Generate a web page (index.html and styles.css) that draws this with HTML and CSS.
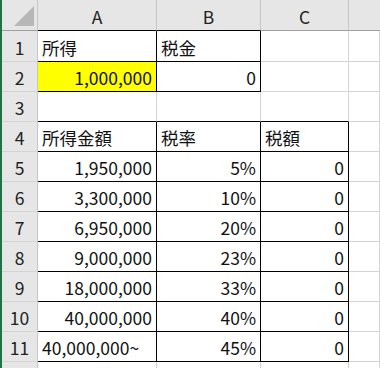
FILE: index.html
```html
<!DOCTYPE html>
<html lang="ja">
<head>
  <meta charset="UTF-8" />
  <meta name="viewport" content="width=device-width, initial-scale=1" />
  <title>所得税</title>
  <link rel="stylesheet" href="styles.css">
</head>
<body>
  <div class="sheet">
    <!-- column headers -->
    <div class="corner">
      <svg width="22" height="22" viewBox="0 0 22 22"><polygon points="21,1 21,21 1,21" fill="#b7b7b7"/></svg>
    </div>
    <div class="colhead bb">A</div>
    <div class="colhead bb">B</div>
    <div class="colhead">C</div>
    <div class="colhead last"></div>

    <!-- 1 -->
    <div class="rowhead">1</div>
    <div class="cell br bb">所得</div>
    <div class="cell br bb">税金</div>
    <div class="cell"></div>
    <div class="cell"></div>

    <!-- 2 -->
    <div class="rowhead">2</div>
    <div class="cell num yellow br bb">1,000,000</div>
    <div class="cell num br bb">0</div>
    <div class="cell"></div>
    <div class="cell"></div>

    <!-- 3 -->
    <div class="rowhead">3</div>
    <div class="cell bb"></div>
    <div class="cell bb"></div>
    <div class="cell bb"></div>
    <div class="cell"></div>

    <!-- 4 -->
    <div class="rowhead">4</div>
    <div class="cell br bb">所得金額</div>
    <div class="cell br bb">税率</div>
    <div class="cell br bb">税額</div>
    <div class="cell"></div>

    <div class="rowhead">5</div>
    <div class="cell num br bb">1,950,000</div>
    <div class="cell num br bb">5%</div>
    <div class="cell num br bb">0</div>
    <div class="cell"></div>

    <div class="rowhead">6</div>
    <div class="cell num br bb">3,300,000</div>
    <div class="cell num br bb">10%</div>
    <div class="cell num br bb">0</div>
    <div class="cell"></div>

    <div class="rowhead">7</div>
    <div class="cell num br bb">6,950,000</div>
    <div class="cell num br bb">20%</div>
    <div class="cell num br bb">0</div>
    <div class="cell"></div>

    <div class="rowhead">8</div>
    <div class="cell num br bb">9,000,000</div>
    <div class="cell num br bb">23%</div>
    <div class="cell num br bb">0</div>
    <div class="cell"></div>

    <div class="rowhead">9</div>
    <div class="cell num br bb">18,000,000</div>
    <div class="cell num br bb">33%</div>
    <div class="cell num br bb">0</div>
    <div class="cell"></div>

    <div class="rowhead">10</div>
    <div class="cell num br bb">40,000,000</div>
    <div class="cell num br bb">40%</div>
    <div class="cell num br bb">0</div>
    <div class="cell"></div>

    <div class="rowhead">11</div>
    <div class="cell br bb">40,000,000~</div>
    <div class="cell num br bb">45%</div>
    <div class="cell num br bb">0</div>
    <div class="cell"></div>

    <!-- 12 (cut off) -->
    <div class="rowhead edge"></div>
    <div class="cell edge"></div>
    <div class="cell edge"></div>
    <div class="cell edge"></div>
    <div class="cell edge"></div>
  </div>
</body>
</html>
```

FILE: styles.css
```css
* {
  box-sizing: border-box;
}

body {
  margin: 0;
  background: #fff;
  font-family: "Noto Sans CJK JP", "Noto Sans", sans-serif;
  font-size: 17.5px;
  color: #111;
  overflow: hidden;
}

/* Worksheet grid: row header + columns A, B, C, D */
.sheet {
  display: grid;
  grid-template-columns: 36px 119px 104px 88px 1fr;
  grid-template-rows: 31px 31px repeat(10, 30px) 6px;
  border-left: 2px solid #217346;
  height: 368px;
  overflow: hidden;
}

.corner,
.colhead,
.rowhead {
  background: #e6e6e6;
  color: #222;
  display: flex;
  align-items: center;
  justify-content: center;
}

.corner {
  border-right: 1px solid #c6c6c6;
  border-bottom: 1px solid #9f9f9f;
  align-items: flex-end;
  justify-content: flex-end;
  padding: 0 2px 3px 0;
}

.colhead {
  border-right: 1px solid #c6c6c6;
  border-bottom: 1px solid #9f9f9f;
  padding-top: 2px;
}

.colhead.last {
  border-right: none;
}

.rowhead {
  border-right: 1px solid #c6c6c6;
  border-bottom: 1px solid #d4d4d4;
  padding-top: 2px;
}

/* Ordinary cells */
.cell {
  border-right: 1px solid #d4d4d4;
  border-bottom: 1px solid #d4d4d4;
  display: flex;
  align-items: center;
  padding: 2px 4px 0 4px;
  white-space: nowrap;
  overflow: hidden;
}

.edge {
  border-bottom: none;
  padding: 0;
}

.cell.num {
  justify-content: flex-end;
}

.yellow {
  background: #ffff00;
}

/* thin black borders */
.br {
  border-right-color: #000;
}

.bb {
  border-bottom-color: #000;
}
```
